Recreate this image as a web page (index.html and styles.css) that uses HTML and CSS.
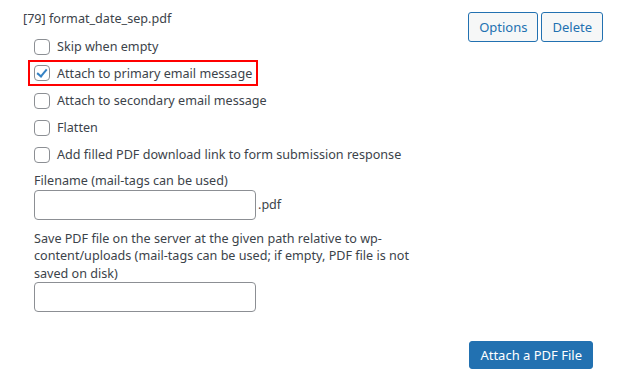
FILE: index.html
```html
<!DOCTYPE html>
<html lang="en">
<head>
  <meta charset="UTF-8">
  <title>PDF attachment</title>
  <link rel="stylesheet" href="styles.css">
</head>
<body>
  <div class="attachment">
    <div class="attachment-head">
      <span class="attachment-name">[79] format_date_sep.pdf</span>
      <div class="attachment-actions">
        <button type="button" class="btn-secondary">Options</button>
        <button type="button" class="btn-secondary">Delete</button>
      </div>
    </div>
    <div class="attachment-options">
      <label class="check-row"><input type="checkbox"><span>Skip when empty</span></label>
      <label class="check-row is-marked"><input type="checkbox" checked><span>Attach to primary email message</span></label>
      <label class="check-row"><input type="checkbox"><span>Attach to secondary email message</span></label>
      <label class="check-row"><input type="checkbox"><span>Flatten</span></label>
      <label class="check-row"><input type="checkbox"><span>Add filled PDF download link to form submission response</span></label>

      <div class="field">
        <label class="field-label">Filename (mail-tags can be used)</label>
        <div class="field-input">
          <input type="text" class="text-input"><span class="suffix">.pdf</span>
        </div>
      </div>

      <div class="field field-path">
        <label class="field-label">Save PDF file on the server at the given path relative to wp-content/uploads (mail-tags can be used; if empty, PDF file is not saved on disk)</label>
        <div class="field-input">
          <input type="text" class="text-input">
        </div>
      </div>
    </div>
    <div class="attachment-foot">
      <button type="button" class="btn-primary">Attach a PDF File</button>
    </div>
  </div>
</body>
</html>
```

FILE: styles.css
```css
/* Base */
body {
  margin: 0;
  background-color: #ffffff;
  font-family: "Noto Sans", "Open Sans", sans-serif;
  font-size: 12.6px;
  color: #3c434a;
}
.attachment {
  width: 580px;
  padding: 10px 0 0 23px;
}
/* Header row */
.attachment-head {
  display: flex;
  justify-content: space-between;
  align-items: flex-start;
}
.attachment-name {
  line-height: 18px;
}
.attachment-actions {
  display: flex;
  gap: 3px;
  margin-top: 2px;
}
.btn-secondary,
.btn-primary {
  font-family: inherit;
  font-size: 13px;
  border-radius: 3px;
  padding: 0 10px;
  cursor: pointer;
}
.btn-secondary {
  height: 30px;
  border: 1px solid #2271b1;
  background-color: #f6f7f7;
  color: #2271b1;
}
.btn-primary {
  height: 28px;
  border: 1px solid #2271b1;
  background-color: #2271b1;
  color: #ffffff;
}
/* Options */
.attachment-options {
  padding-left: 11px;
  margin-top: -9px;
}
.check-row {
  display: flex;
  align-items: center;
  gap: 7px;
  height: 27px;
  width: max-content;
}
.check-row input {
  appearance: none;
  margin: 0;
  width: 16px;
  height: 16px;
  border: 1px solid #8c8f94;
  border-radius: 4px;
  background-color: #ffffff;
  position: relative;
}
.check-row input:checked::after {
  content: "";
  position: absolute;
  left: 4px;
  top: 1px;
  width: 4px;
  height: 8px;
  border: solid #3582c4;
  border-width: 0 2.5px 2.5px 0;
  transform: rotate(40deg);
}
/* Red highlight round the marked option */
.is-marked {
  box-sizing: border-box;
  height: 26px;
  margin: 0 0 1px -6px;
  padding: 0 4px 0 4px;
  border: 2px solid #ff0000;
}
.field {
  margin-top: 4px;
}
.field-label {
  display: block;
  line-height: 17.5px;
}
.field-input {
  display: flex;
  align-items: center;
}
.text-input {
  width: 222px;
  height: 30px;
  box-sizing: border-box;
  margin: 0;
  border: 1px solid #8c8f94;
  border-radius: 4px;
  background-color: #ffffff;
}
.suffix {
  margin-left: 2px;
}
.field-path {
  margin-top: 10px;
  width: 385px;
}
/* Footer */
.attachment-foot {
  display: flex;
  justify-content: flex-end;
  margin-top: 29px;
  padding-right: 10px;
}
```
